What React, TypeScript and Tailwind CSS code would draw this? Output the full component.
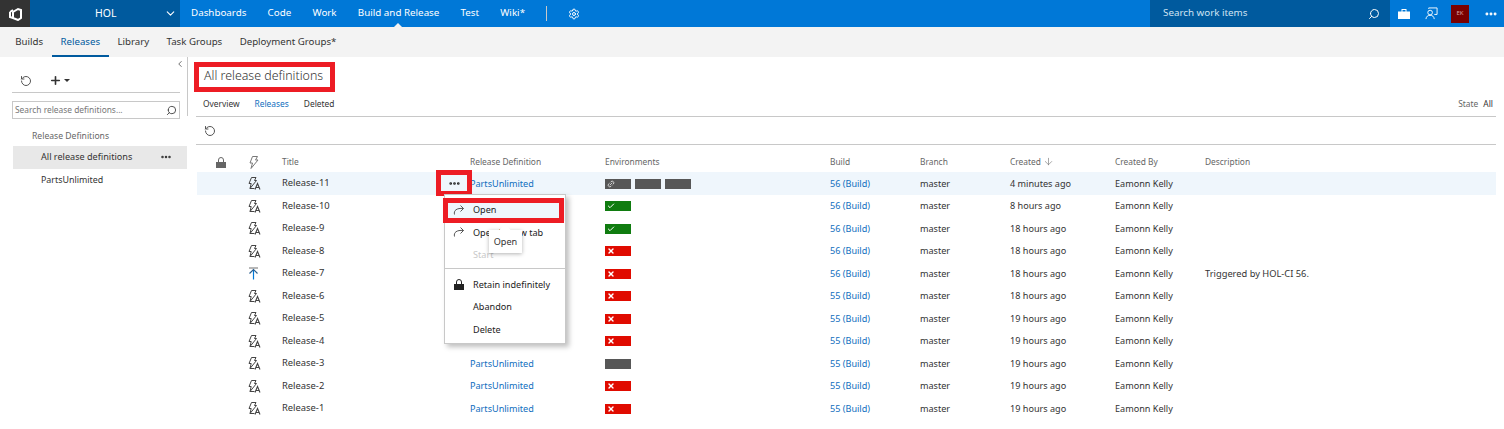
import { ChevronDown, ChevronLeft, RotateCw, Search, Plus, Settings, ArrowDown, Check, X, Link2, Ellipsis } from "lucide-react";

const releases = [
  { title: "Release-11", time: "4 minutes ago", build: "56 (Build)", envs: ["link", "gray", "gray"] },
  { title: "Release-10", time: "8 hours ago", build: "56 (Build)", envs: ["ok"] },
  { title: "Release-9", time: "18 hours ago", build: "56 (Build)", envs: ["ok"] },
  { title: "Release-8", time: "18 hours ago", build: "56 (Build)", envs: ["fail"] },
  { title: "Release-7", time: "18 hours ago", build: "56 (Build)", envs: ["fail"], desc: "Triggered by HOL-CI 56.", manual: true },
  { title: "Release-6", time: "18 hours ago", build: "55 (Build)", envs: ["fail"] },
  { title: "Release-5", time: "19 hours ago", build: "55 (Build)", envs: ["fail"] },
  { title: "Release-4", time: "19 hours ago", build: "55 (Build)", envs: ["fail"] },
  { title: "Release-3", time: "19 hours ago", build: "55 (Build)", envs: ["gray"] },
  { title: "Release-2", time: "19 hours ago", build: "55 (Build)", envs: ["fail"] },
  { title: "Release-1", time: "19 hours ago", build: "55 (Build)", envs: ["fail"] },
];

const cols = "grid grid-cols-[50px_36px_188px_135px_225px_90px_90px_105px_90px_1fr] items-center";

function Bolt() {
  return (
    <svg viewBox="0 0 10 13" className="h-[13px] w-[10px] text-[#777]" fill="none" stroke="currentColor" strokeWidth="1">
      <path d="M3.500.5H8.500L6.500 4H9L2 12.500 3.500 7H1z" />
    </svg>
  );
}

function AutoRelease() {
  return (
    <svg viewBox="0 0 13 13" className="h-[13px] w-[13px] text-[#444]" fill="none" stroke="currentColor" strokeWidth="1">
      <path d="M3.500.5h4.500L6.500 3.500h2L2 11.500 3.200 6.500H1z" />
      <path d="M2 11.500h4.500" />
      <path d="M7 12.500 9.500 6.500l2.500 6M8 10.500h3" strokeWidth="1.100" />
    </svg>
  );
}

function ManualRelease() {
  return (
    <svg viewBox="0 0 11 13" className="h-[13px] w-[11px]" fill="none" strokeWidth="1.200">
      <path d="M1 1h9" stroke="#888" />
      <path d="M5.500 12.500V3" stroke="#0078d7" />
      <path d="M1.500 6.500l4-4 4 4" stroke="#2b5f8f" />
    </svg>
  );
}

function LockIcon({ className }: { className: string }) {
  return (
    <svg viewBox="0 0 10 11" className={className}>
      <path d="M0 5h10v6H0z" fill="currentColor" />
      <path d="M2.500 5V3a2.500 2.500 0 0 1 5 0v2" fill="none" stroke="currentColor" strokeWidth="1" />
    </svg>
  );
}

function OpenArrow() {
  return (
    <svg viewBox="0 0 12 10" className="h-[10px] w-[12px] text-[#555]" fill="none" stroke="currentColor" strokeWidth="1">
      <path d="M1.500 9.500C.5 5.500 3.500 2.800 10.500 3.500" />
      <path d="M7.500.5l3 3-3 3" />
    </svg>
  );
}

function Env({ kind }: { kind: string }) {
  const bg = kind === "ok" ? "bg-[#107c10]" : kind === "fail" ? "bg-[#e00b00]" : "bg-[#575757]";
  return (
    <span className={`flex h-[10px] w-[26px] items-center pl-[2px] text-white ${bg}`}>
      {kind === "ok" && <Check size={8} strokeWidth={3} />}
      {kind === "fail" && <X size={8} strokeWidth={4} />}
      {kind === "link" && <Link2 size={8} strokeWidth={2} className="-rotate-45" />}
    </span>
  );
}

function MenuItem({ label, icon, disabled, active }: { label: string; icon?: React.ReactNode; disabled?: boolean; active?: boolean }) {
  return (
    <div className={`flex h-[22.5px] items-center ${disabled ? "text-[#c8c8c8]" : "text-[#222]"} ${active ? "bg-[#eff6fc]" : ""}`}>
      <span className="flex w-[28px] justify-center">{icon}</span>
      {label}
    </div>
  );
}

export default function App() {
  return (
    <div className="relative h-[429px] w-[1504px] overflow-hidden bg-white font-['Noto_Sans',sans-serif] text-[9.1px] text-[#333]">
      {/* top bar */}
      <div className="flex h-[27px] items-center bg-[#0078d7] text-[9.8px] text-white">
        <div className="flex h-full w-[30px] items-center justify-center bg-[#333]">
          <svg viewBox="0 0 15 14" className="h-[14px] w-[15px]" fill="none" stroke="white" strokeWidth="2">
            <path d="M2 5v5l3 1V5l5-3 3 1v8l-3 2-5-2" />
            <path d="M2 5l3-2" />
          </svg>
        </div>
        <div className="flex h-full w-[150px] items-center justify-between bg-[#005a9e] pr-[3px] pl-[65px]">
          <span className="text-[10.5px]">HOL</span>
          <ChevronDown size={13} />
        </div>
        <nav className="relative flex h-full items-center gap-[21.2px] pl-[11px]">
          <span>Dashboards</span>
          <span>Code</span>
          <span>Work</span>
          <span>Build and Release</span>
          <span>Test</span>
          <span>Wiki*</span>
          <span className="h-[15px] w-px bg-[#c8c8c8]" />
          <Settings size={12} />
          <span className="absolute bottom-0 left-[214px] h-0 w-0 border-x-[4px] border-b-[4px] border-x-transparent border-b-[#f3f3f3]" />
        </nav>
        <div className="ml-auto flex h-full w-[240px] items-center justify-between bg-[#005a9e] pr-[10px] pl-[13px] text-[#cfe3f3]">
          <span>Search work items</span>
          <Search size={12} className="-scale-x-100 text-white" />
        </div>
        <div className="flex h-full w-[114px] items-center pl-[8px]">
          <svg viewBox="0 0 12 12" className="h-[12px] w-[12px]" fill="white">
            <path d="M0 3.500h12V11H0zM3.500 3.500V1h5v2.500h-1V2h-3v1.500z" />
          </svg>
          <svg viewBox="0 0 14 14" className="ml-[15px] h-[13px] w-[13px]" fill="none" stroke="white">
            <path d="M4 2V1h9v7h-3" />
            <circle cx="5.500" cy="6" r="2.500" />
            <path d="M1 13c.5-3 2-4 4.500-4s4 1 4.500 4" />
          </svg>
          <span className="ml-[13px] flex h-[18px] w-[18px] items-center justify-center bg-[#7a0000] text-[6px] text-[#d9a0a0]">EK</span>
          <Ellipsis size={14} className="ml-[15px]" strokeWidth={3} />
        </div>
      </div>

      {/* sub nav */}
      <div className="flex h-[30px] bg-[#f3f3f3] pl-[6.5px] text-[9.7px]">
        {["Builds", "Releases", "Library", "Task Groups", "Deployment Groups*"].map((t) => (
          <span
            key={t}
            className={`flex items-center border-b-2 px-[8.7px] pt-[2px] ${t === "Releases" ? "border-[#005a9e] text-[#005a9e]" : "border-transparent"}`}
          >
            {t}
          </span>
        ))}
      </div>

      <div className="flex">
        {/* sidebar */}
        <aside className="w-[187px] shrink-0 pl-[12px]">
          <div className="flex h-[14px] items-center justify-end pr-[2px] text-[#555]">
            <ChevronLeft size={10} />
          </div>
          <div className="mr-[7px] flex h-[22px] items-center gap-[17px] border-b border-[#c8c8c8] pb-[2px] pl-[8px]">
            <RotateCw size={12} className="-scale-x-100 text-[#555]" />
            <span className="flex items-center gap-[2px]">
              <Plus size={13} strokeWidth={3} />
              <span className="h-0 w-0 border-x-[3px] border-t-[3px] border-x-transparent border-t-[#333]" />
            </span>
          </div>
          <div className="mt-[8px] mr-[7px] flex h-[18px] items-center justify-between border border-[#c8c8c8] px-[2px] text-[#777]">
            <span className="text-[8.4px]">Search release definitions...</span>
            <Search size={11} className="-scale-x-100 text-[#444]" />
          </div>
          <div className="mt-[11px] pl-[20px] text-[8.6px] leading-[13px] text-[#666]">Release Definitions</div>
          <div className="mt-[3px] ml-[1px] flex h-[23px] items-center justify-between bg-[#e8e8e8] pr-[15px] pb-[2px] pl-[28px]">
            <span>All release definitions</span>
            <Ellipsis size={12} strokeWidth={3} />
          </div>
          <div className="flex h-[22px] items-center pl-[29px] text-[8.9px]">PartsUnlimited</div>
        </aside>
        <div className="h-[59px] w-[1px] shrink-0 bg-[#c8c8c8]" />

        {/* content */}
        <main className="mr-[8px] ml-[8px] flex-1">
          <div className="flex h-[38px] items-center pt-[1px] pl-[8px] text-[12.4px] font-light text-[#333]">All release definitions</div>
          <div className="flex h-[22px] items-start justify-between border-b border-[#c8c8c8] pt-[3px] pr-[3px] pl-[7px] text-[8.4px]">
            <div className="flex gap-[15px]">
              <span>Overview</span>
              <span className="text-[#106ebe]">Releases</span>
              <span>Deleted</span>
            </div>
            <div className="flex gap-[5px]">
              <span className="text-[#666]">State</span>
              <span>All</span>
            </div>
          </div>
          <div className="flex h-[28px] items-center border-b border-[#c8c8c8] pl-[8px]">
            <RotateCw size={12} className="-scale-x-100 text-[#555]" />
          </div>
          <div className={`${cols} h-[27px] pt-[7px] text-[8.4px] text-[#666]`}>
            <span className="flex justify-center">
              <LockIcon className="h-[11px] w-[10px] text-[#666]" />
            </span>
            <span className="pl-[3px]">
              <Bolt />
            </span>
            <span>Title</span>
            <span>Release Definition</span>
            <span>Environments</span>
            <span>Build</span>
            <span>Branch</span>
            <span className="flex items-center gap-[2px]">
              Created <ArrowDown size={11} strokeWidth={1.25} />
            </span>
            <span>Created By</span>
            <span>Description</span>
          </div>
          {releases.map((r, i) => (
            <div key={r.title} className={`${cols} ml-[1px] h-[22.5px] pt-[0.6px] ${i === 0 ? "bg-[#eff6fc]" : ""}`}>
              <span className="-ml-[1px]" />
              <span className="-ml-[1px] pl-[2px]">{r.manual ? <ManualRelease /> : <AutoRelease />}</span>
              <span className="-ml-[1px] text-[9.4px]">{r.title}</span>
              <span className="-ml-[1px] text-[#106ebe]">PartsUnlimited</span>
              <span className="-ml-[1px] mt-[0.7px] flex gap-[4px]">
                {r.envs.map((e, n) => (
                  <Env key={n} kind={e} />
                ))}
              </span>
              <span className="-ml-[1px] text-[#106ebe]">{r.build}</span>
              <span className="-ml-[1px]">master</span>
              <span className="-ml-[1px]">{r.time}</span>
              <span className="-ml-[1px]">Eamonn Kelly</span>
              <span className="-ml-[1px] text-[9.3px]">{r.desc}</span>
            </div>
          ))}
        </main>
      </div>

      {/* row menu trigger */}
      <div className="absolute top-[170px] left-[436px] flex h-[26px] w-[36px] items-center justify-center border-[5px] border-[#ed1c24] bg-[#eff6fc] text-[#222]">
        <Ellipsis size={13} strokeWidth={3} />
      </div>

      {/* context menu */}
      <div className="absolute top-[194px] left-[444px] h-[150px] w-[122px] border border-[#c8c8c8] bg-white py-[3.6px] shadow-[3px_3px_5px_rgba(0,0,0,0.25)]">
        <MenuItem label="Open" icon={<OpenArrow />} active />
        <MenuItem label="Open in new tab" icon={<OpenArrow />} />
        <MenuItem label="Start" disabled />
        <div className="mt-[2px] mb-[4px] h-px bg-[#c8c8c8]" />
        <MenuItem label="Retain indefinitely" icon={<LockIcon className="h-[11px] w-[10px] text-[#222]" />} />
        <MenuItem label="Abandon" />
        <MenuItem label="Delete" />
      </div>

      {/* tooltip */}
      <div className="absolute top-[230px] left-[489px] flex h-[23px] w-[33px] items-center justify-center bg-white shadow-[0_1px_4px_rgba(0,0,0,0.3)]">
        <span className="absolute -top-[4px] left-[12px] h-[8px] w-[8px] rotate-45 bg-white" />
        <span className="relative">Open</span>
      </div>

      {/* annotation boxes */}
      <div className="pointer-events-none absolute top-[62px] left-[194px] h-[30px] w-[141px] border-[5px] border-[#ed1c24]" />
      <div className="pointer-events-none absolute top-[198px] left-[443px] h-[25px] w-[121px] border-[5px] border-[#ed1c24]" />
    </div>
  );
}
